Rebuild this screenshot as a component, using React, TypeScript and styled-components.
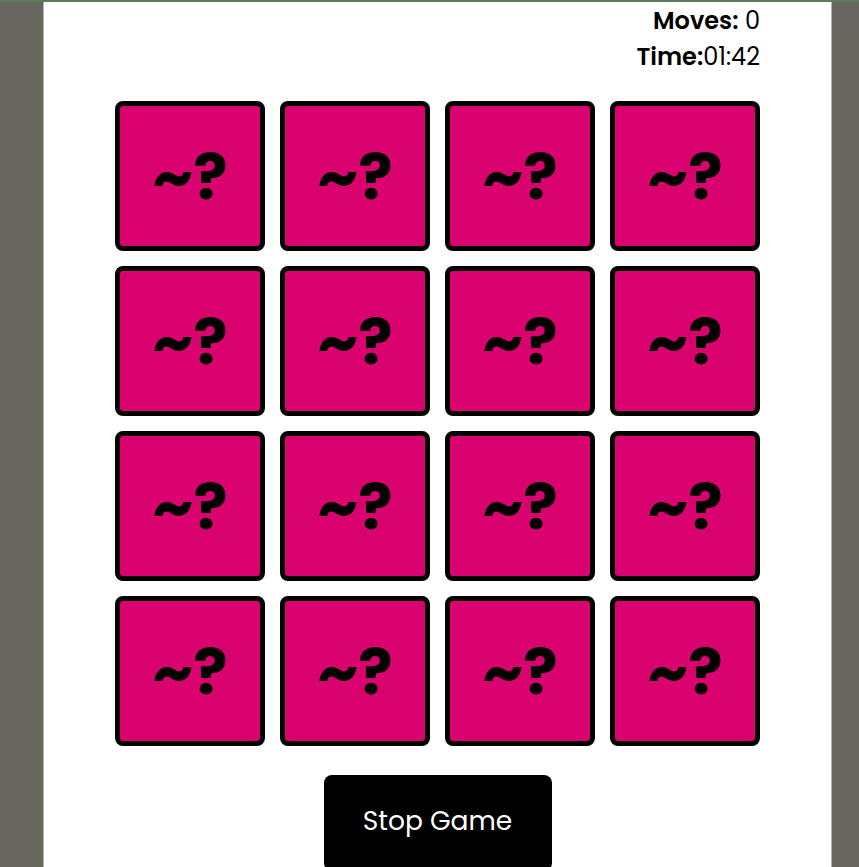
import React from "react";
import styled, { createGlobalStyle } from "styled-components";

const Global = createGlobalStyle`
  html, body { margin: 0; padding: 0; height: 100%; }
  body {
    background: #67665f;
    border-top: 2px solid #5b7d5a;
    padding-left: 16px;
    box-sizing: border-box;
    font-family: "Poppins", "Inter", "DejaVu Sans", sans-serif;
    overflow: hidden;
  }
  #root { height: 100%; }
`;

const Panel = styled.main`
  width: 787px;
  min-height: 100%;
  margin: 0 auto;
  background: #ffffff;
  border-left: 1px solid #b4b4ae;
  border-right: 1px solid #b4b4ae;
  display: flex;
  flex-direction: column;
  align-items: center;
`;

const Stats = styled.div`
  width: 645px;
  display: flex;
  flex-direction: column;
  align-items: flex-end;
  gap: 10px;
  padding-top: 6px;
  color: #000;
`;

const Stat = styled.div`
  font-size: 24px;
  line-height: 26px;
`;

const Label = styled.span`
  font-weight: 600;
`;

const Grid = styled.div`
  margin-top: 31px;
  display: grid;
  grid-template-columns: repeat(4, 150px);
  grid-auto-rows: 150px;
  gap: 15px;
`;

const Card = styled.button`
  box-sizing: border-box;
  width: 150px;
  height: 150px;
  padding: 0;
  background: #d9026f;
  border: 5px solid #000;
  border-radius: 8px;
  display: flex;
  align-items: center;
  justify-content: center;
  font-family: "Poppins", "Inter", "DejaVu Sans", sans-serif;
  font-weight: 700;
  font-size: 64px;
  color: #000;
  cursor: pointer;
`;

const StopButton = styled.button`
  margin-top: 29px;
  width: 228px;
  height: 96px;
  background: #000;
  color: #fff;
  border: none;
  border-radius: 8px;
  font-family: "Poppins", "Inter", "DejaVu Sans", sans-serif;
  font-size: 26.5px;
  cursor: pointer;
  padding: 0 0 4px;
`;

export default function App() {
  const cards = Array.from({ length: 16 }, (_, i) => i);
  return (
    <>
      <Global />
      <Panel>
        <Stats>
          <Stat>
            <Label>Moves:</Label> 0
          </Stat>
          <Stat>
            <Label>Time:</Label>01:42
          </Stat>
        </Stats>
        <Grid>
          {cards.map((i) => (
            <Card key={i}>~?</Card>
          ))}
        </Grid>
        <StopButton>Stop Game</StopButton>
      </Panel>
    </>
  );
}
